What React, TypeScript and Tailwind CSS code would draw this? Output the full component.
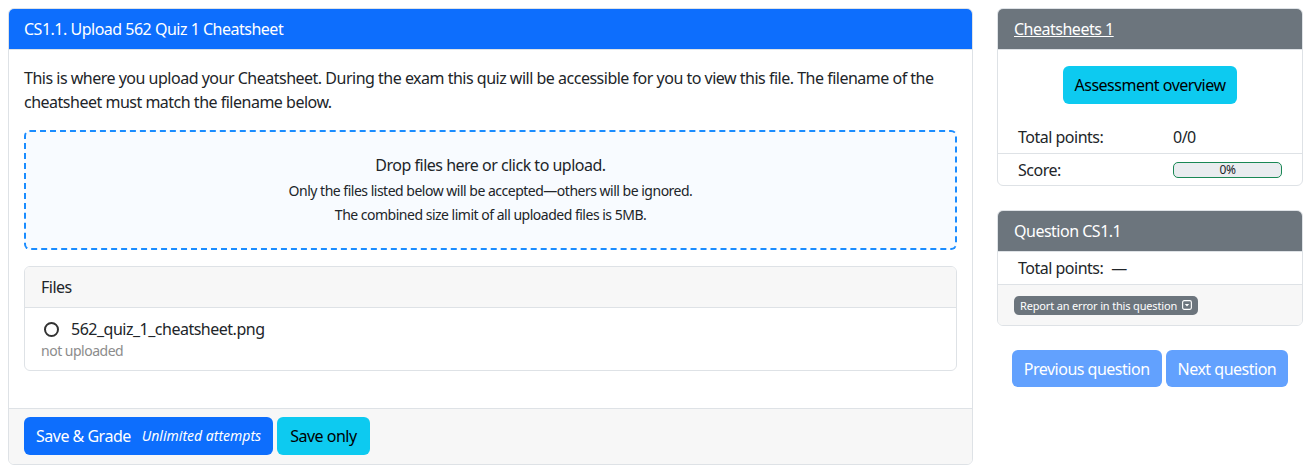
import React from "react";

function CaretSquareDown() {
  return (
    <svg width="10" height="10" viewBox="0 0 16 16" className="inline-block">
      <rect x="1" y="1" width="14" height="14" rx="2.5" fill="none" stroke="white" strokeWidth="1.8" />
      <path d="M4.5 6.5 L8 10.5 L11.5 6.5 Z" fill="white" />
    </svg>
  );
}

export default function App() {
  return (
    <div className="font-['Segoe_UI','Noto_Sans',sans-serif] tracking-[-0.031em] text-[16px] leading-[24px] text-[#212529] bg-white w-[1310px] h-[472px] flex gap-[24px] pl-[8px] pt-[8px]">
      {/* Main card */}
      <div className="w-[965px] h-[457px] border border-[#dee2e6] rounded-[6px] flex flex-col overflow-hidden">
        <div className="bg-[#0d6efd] text-white h-[41px] px-[15px] flex items-center border-b border-[#dee2e6]">
          CS1.1. Upload 562 Quiz 1 Cheatsheet
        </div>
        <div className="flex-1 px-[15px] pt-[16px]">
          <p className="mb-[16px]">
            This is where you upload your Cheatsheet. During the exam this quiz will be accessible for you to view this file. The filename of the cheatsheet must match the filename below.
          </p>
          <div className="h-[120px] border-2 border-dashed border-[#1a8cff] rounded-[6px] bg-[#f8fbff] flex flex-col items-center justify-center">
            <div className="leading-[24px]">Drop files here or click to upload.</div>
            <div className="text-[14px] leading-[24px] pt-[2px]">Only the files listed below will be accepted—others will be ignored.</div>
            <div className="text-[14px] leading-[24px]">The combined size limit of all uploaded files is 5MB.</div>
          </div>
          <div className="mt-[16px] border border-[#dee2e6] rounded-[6px] overflow-hidden">
            <div className="bg-[#f7f7f7] h-[41px] px-[16px] flex items-center border-b border-[#dee2e6]">Files</div>
            <div className="px-[16px] pt-[9px] pb-[9px]">
              <div className="flex items-center gap-[12px] h-[24px]">
                <span className="w-[15px] h-[15px] rounded-full border-[2px] border-[#333] inline-block ml-[3px]"></span>
                <span>562_quiz_1_cheatsheet.png</span>
              </div>
              <div className="text-[14px] leading-[20px] text-[#8c8c8c]">not uploaded</div>
            </div>
          </div>
        </div>
        <div className="bg-[#f7f7f7] border-t border-[#dee2e6] h-[56px] px-[15px] pt-[8px] flex items-start gap-[4px]">
          <button className="bg-[#0d6efd] text-white h-[38px] pl-[12px] pr-[12px] rounded-[6px] flex items-center gap-[11px]">
            <span>Save &amp; Grade</span>
            <span className="text-[14px] italic tracking-[0em]">Unlimited attempts</span>
          </button>
          <button className="bg-[#0dcaf0] text-black h-[38px] px-[13px] rounded-[6px]">Save only</button>
        </div>
      </div>

      {/* Right column */}
      <div className="w-[306px] flex flex-col">
        <div className="border border-[#dee2e6] rounded-[6px] overflow-hidden h-[178px]">
          <div className="bg-[#6c757d] text-white h-[41px] px-[16px] flex items-center border-b border-[#dee2e6]">
            <a className="underline">Cheatsheets 1</a>
          </div>
          <div className="pt-[16px] flex justify-center">
            <button className="bg-[#0dcaf0] text-black h-[38px] px-[12px] rounded-[6px]">Assessment overview</button>
          </div>
          <div className="mt-[17px]">
            <div className="flex h-[33px] items-center px-[20px] border-b border-[#dee2e6]">
              <span className="w-[155px]">Total points:</span>
              <span>0/0</span>
            </div>
            <div className="flex h-[32px] items-center px-[20px]">
              <span className="w-[155px]">Score:</span>
              <div className="w-[109px] h-[16px] rounded-[5px] border border-[#198754] bg-[#e9ecef] text-[12px] leading-[14px] text-center text-[#212529]">0%</div>
            </div>
          </div>
        </div>

        <div className="mt-[24px] border border-[#dee2e6] rounded-[6px] overflow-hidden">
          <div className="bg-[#6c757d] text-white h-[41px] px-[16px] flex items-center border-b border-[#dee2e6]">
            Question CS1.1
          </div>
          <div className="h-[33px] px-[20px] flex items-center border-b border-[#dee2e6]">
            <span>Total points:</span>
            <span className="ml-[8px]">—</span>
          </div>
          <div className="bg-[#f7f7f7] h-[40px] px-[16px] flex items-center">
            <span className="bg-[#6c757d] text-white text-[11px] tracking-[-0.015em] leading-[19px] h-[19px] px-[6px] rounded-[5px] flex items-center gap-[5px]">
              Report an error in this question <CaretSquareDown />
            </span>
          </div>
        </div>

        <div className="mt-[24px] flex justify-center gap-[4px]">
          <button className="bg-[#62a1fe] text-white h-[37px] px-[12px] rounded-[6px]">Previous question</button>
          <button className="bg-[#62a1fe] text-white h-[37px] px-[12px] rounded-[6px]">Next question</button>
        </div>
      </div>
    </div>
  );
}
